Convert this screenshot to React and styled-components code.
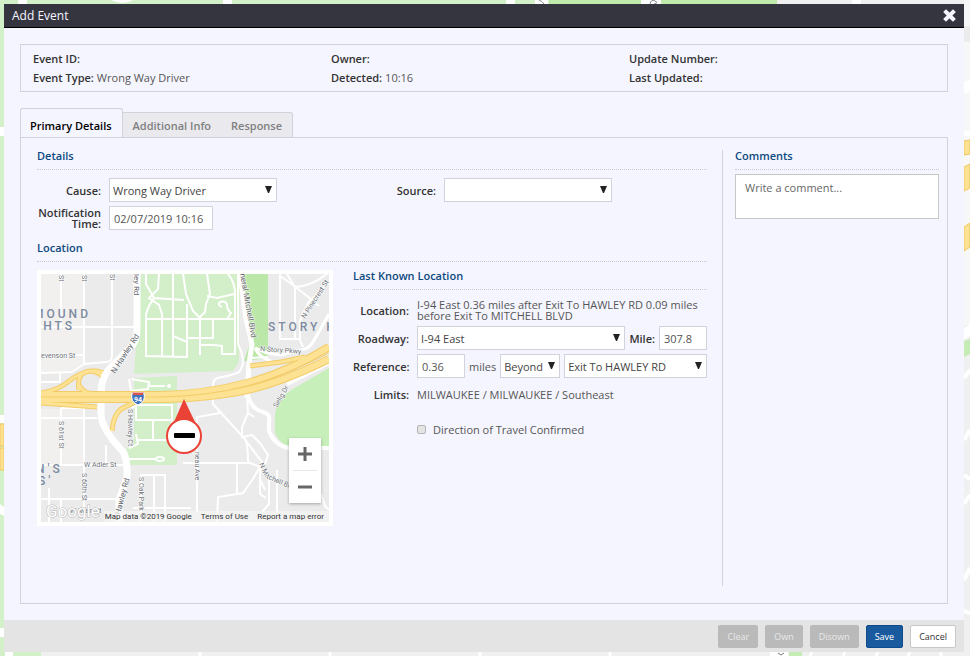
import React, { useState } from "react";
import styled, { createGlobalStyle } from "styled-components";

const GlobalStyle = createGlobalStyle`
    *{
        box-sizing: border-box;
    }
    body{
        margin: 0;
        background-color: #f0f0f0;
        color: #333;
        font-family: "Open Sans", "Noto Sans", sans-serif;
        font-size: 11px;
    }
    button, input, select, textarea{
        font-family: inherit;
        font-size: inherit;
        color: inherit;
    }
`

const Page = styled.div`
    display: flex;
    flex-direction: column;
    min-height: 100vh;
    padding: 4px 6px 4px 4px;
`

const BackdropSvg = styled.svg`
    position: fixed;
    top: 0;
    left: 0;
    width: 100%;
    height: 100%;
    z-index: -1;
`

const Dialog = styled.section`
    display: flex;
    flex-direction: column;
    flex: 1;
    background-color: #f5f5ff;
`

const TitleBar = styled.header`
    display: flex;
    align-items: center;
    justify-content: space-between;
    height: 24px;
    padding: 0 8px 1px;
    background-color: #35353f;
    border-bottom: 1px solid #000;
    color: #f5f5ff;
`

const Title = styled.h1`
    margin: 0;
    font-size: 12px;
    font-weight: normal;
`

const CloseButton = styled.button`
    display: flex;
    padding: 0;
    border: 0;
    background: none;
    color: #f5f5ff;
    cursor: pointer;
`

const Body = styled.div`
    display: flex;
    flex-direction: column;
    flex: 1;
    padding: 16px;
`

const Summary = styled.dl`
    display: grid;
    grid-template-columns: repeat(3, 1fr);
    margin: 0 0 16px;
    padding: 4px 20px 4px 12px;
    border: 1px solid #d2d2dd;
    line-height: 19px;
`

const SummaryItem = styled.div`
    display: flex;
    gap: 3px;
    dt{
        font-weight: 600;
    }
    dd{
        margin: 0;
        color: #555;
    }
`

const TabList = styled.div`
    display: flex;
    align-items: flex-end;
    margin-bottom: -1px;
`

const Tab = styled.button`
    height: ${(props) => (props.$active ? 30 : 26)}px;
    padding: ${(props) => (props.$active ? "4px 10px 0 9px" : "0 10px")};
    border: 1px solid #d2d2dd;
    border-left-width: ${(props) => (props.$active ? 1 : 0)}px;
    border-right-width: ${(props) => (props.$inner ? 0 : 1)}px;
    border-bottom-color: ${(props) => (props.$active ? "#f5f5ff" : "#d2d2dd")};
    border-radius: ${(props) => (props.$inner ? "0" : props.$active ? "3px 3px 0 0" : "0 3px 0 0")};
    background-color: ${(props) => (props.$active ? "#f5f5ff" : "#eaeaee")};
    color: ${(props) => (props.$active ? "#000" : "#808080")};
    font-weight: 600;
    cursor: pointer;
`

const Panel = styled.div`
    display: flex;
    flex: 1;
    padding: 12px 8px 17px 16px;
    border: 1px solid #d2d2dd;
`

const Main = styled.div`
    flex: 1;
    padding-right: 15px;
    border-right: 1px solid #d2d2dd;
`

const Comments = styled.aside`
    width: 216px;
    padding-left: 12px;
`

const Heading = styled.h2`
    height: 20px;
    margin: 0 0 8px;
    border-bottom: 1px dotted #c8c8d2;
    color: #0d4a80;
    font-size: 11px;
    font-weight: 600;
    line-height: 12px;
`

const DetailsGrid = styled.div`
    display: grid;
    grid-template-columns: 1fr 1fr;
    gap: 4px 0;
    margin-bottom: 12px;
`

const Field = styled.div`
    display: flex;
    align-items: center;
    min-height: 24px;
    gap: 4px;
`

const Label = styled.label`
    width: ${(props) => props.$width || "auto"};
    margin-right: ${(props) => (props.$width ? 4 : 0)}px;
    flex-shrink: 0;
    font-weight: 600;
    line-height: 11px;
    text-align: right;
`

const Input = styled.input`
    width: ${(props) => props.$width}px;
    height: 24px;
    padding: 0 4px;
    border: 1px solid #d2d2dd;
    background-color: #fff;
    color: #555;
`

const SelectBox = styled.div`
    position: relative;
    flex: ${(props) => (props.$width ? "none" : "1")};
    width: ${(props) => (props.$width ? props.$width + "px" : "auto")};
    select{
        width: 100%;
        height: 24px;
        padding: 0 14px 0 3px;
        border: 1px solid #d2d2dd;
        border-radius: 0;
        background-color: #fff;
        color: #444;
        appearance: none;
    }
    svg{
        position: absolute;
        top: 8px;
        right: 5px;
        pointer-events: none;
    }
`

const LocationRow = styled.div`
    display: flex;
    align-items: flex-start;
    gap: 20px;
`

const LastKnown = styled.div`
    display: flex;
    flex-direction: column;
    flex: 1;
    gap: 4px;
    ${Heading}{
        margin-bottom: 4px;
    }
`

const Value = styled.span`
    color: #555;
    line-height: 11px;
`

const CheckRow = styled.label`
    display: flex;
    align-items: center;
    gap: 7px;
    height: 24px;
    margin: 7px 0 0 64px;
    color: #555;
    input{
        width: 9px;
        height: 9px;
        margin: 0;
        border: 1px solid #b4b4b4;
        border-radius: 2px;
        background-color: #e4e4e4;
        appearance: none;
    }
    input:checked{
        background-color: #185a9d;
    }
`

const CommentBox = styled.textarea`
    display: block;
    width: 100%;
    height: 45px;
    margin-top: -4px;
    padding: 5px 9px;
    border: 1px solid #c8c8c8;
    background-color: #fff;
    resize: none;
    &::placeholder{
        color: #666;
    }
`

const Footer = styled.footer`
    display: flex;
    justify-content: flex-end;
    align-items: center;
    gap: 7px;
    height: 32px;
    padding: 1px 8px 0;
    background-color: #e4e4e4;
`

const ActionButton = styled.button`
    height: 23px;
    padding: 0 8px;
    border: 1px solid #c8c8c8;
    border-radius: 2px;
    background-color: #fff;
    color: #333;
    font-size: 9px;
    cursor: pointer;
    &:disabled{
        border-color: #bababa;
        background-color: #bababa;
        color: #e8e8e8;
        cursor: default;
    }
`

const PrimaryButton = styled(ActionButton)`
    border-color: #0d4a8c;
    background-color: #185a9d;
    color: #fff;
`

const MapFrame = styled.div`
    position: relative;
    width: 296px;
    height: 256px;
    border: 4px solid #fff;
    overflow: hidden;
    font-family: Roboto, sans-serif;
    > svg{
        display: block;
    }
`

const ZoomControl = styled.div`
    position: absolute;
    right: 8px;
    bottom: 19px;
    display: flex;
    flex-direction: column;
    align-items: center;
    width: 32px;
    background-color: #fff;
    box-shadow: 0 1px 3px rgba(0, 0, 0, 0.3);
    button{
        display: flex;
        align-items: center;
        justify-content: center;
        width: 24px;
        height: 32px;
        padding: 0;
        border: 0;
        background: none;
    }
    button + button{
        height: 33px;
        border-top: 1px solid #e6e6e6;
    }
`

const MapCredits = styled.div`
    position: absolute;
    right: 0;
    bottom: 0;
    display: flex;
    gap: 9px;
    height: 11px;
    padding: 0 5px 0 1px;
    background-color: rgba(245, 245, 245, 0.7);
    color: #333;
    font-size: 8px;
    line-height: 11px;
    white-space: nowrap;
    a{
        color: inherit;
        text-decoration: none;
    }
`

function Backdrop(){
    return  <BackdropSvg viewBox="0 0 970 656" preserveAspectRatio="none" aria-hidden="true">
                <rect width="970" height="656" fill="#f0f0f0" />
                <path d="M0 0H777V4H4V656H0Z" fill="#d3f0c8" />
                <path d="M549 0H777V4H549Z" fill="#bfeaac" />
                <path d="M18 0h9v4h-9zM111 0q12 6 22 0zM223 0h9v4h-9zM506 0h9v4h-9zM535 0h13v4h-13zM641 0h20v4h-20zM852 0h9v4h-9z" fill="#fff" />
                <path d="M539 0q3 1 5 4M650 4q1 -5 5 -3t-1 3" stroke="#888" fill="none" />
                <path d="M0 127h4v9H0zM0 415h4v8H0zM0 504l4 3v9l-4-2zM0 628h4v9H0z" fill="#fff" />
                <path d="M0 424h4v22H0zM0 448h4v22H0z" fill="#fde293" stroke="#f3c65f" />
                <path d="M4 652h37v4H4z" fill="#d3f0c8" />
                <path d="M5 652h8v4H5zM770 652h18v4h-18z" fill="#fff" />
                <path d="M789 652h13v4h-13z" fill="#c5ecb5" />
                <path d="M812 652l-2 4M845 652l-2 4M878 652l-2 4M910 652l-2 4M941 652v4M200 652v4M330 652v4M480 652v4M610 652v4" stroke="#fff" strokeWidth="3" />
                <path d="M778 653l3 2l3-2" stroke="#777" fill="none" />
                <rect x="964" y="0" width="6" height="325" fill="#f7f7f7" />
                <path d="M964 26h6v16h-6z" fill="#ebebeb" />
                <path d="M964 82l6-3v12l-6 3zM964 131h6v5h-6zM964 328l6-4v12l-6 4z" fill="#fff" />
                <path d="M964 141l6-1v14l-6 1zM964 167l6-3v24l-6 3zM964 227l6-4v24l-6 4z" fill="#fde293" stroke="#f3c65f" />
                <path d="M964 341l6-2v15l-6 3z" fill="#c5ecb5" />
                <path d="M964 378l6-8M964 440l6-10M964 475l6 4M964 504l6-9M964 580l6-12M964 611l6 2" stroke="#fff" strokeWidth="4" />
            </BackdropSvg>
}

function AreaMap(){
    return  <svg width="288" height="248" viewBox="0 0 288 248" role="img" aria-label="Map of the event location">
                <rect width="288" height="248" fill="#ebebeb" />
                <path d="M0 0H43V88L28 98H0ZM0 135H43V191H0Z" fill="#f1f0ee" />
                <g fill="#d3efc9">
                    <path d="M100 0H199L198 88L192 97L93 100Z" />
                    <path d="M93 104L136 102V191H87L83 179L93 165Z" />
                </g>
                <path d="M202 0H227V84L203 87L210 66Z" fill="#bbe8a8" />
                <path d="M288 94L252 115L246 119Q234 132 234 141V159Q240 172 251 173H288Z" fill="#c7efba" />
                <g fill="none" stroke="#fff" strokeWidth="2">
                    <path d="M20 0V53M43 0V89M71 0V82Q71 88 65 88L43 90L31 98L0 99M0 53H93M33 81H43M0 108H19V99" />
                    <path d="M105 0V10L113 24L108 32L105 40V82L146 83M118 0L117 15L108 24L118 31L121 40V82M132 0V82M113 24L143 26M105 45H194" />
                    <path d="M142 0L145 20L152 37L159 44V81M146 30V84M166 0L169 20L165 30L164 38L159 43M166 22L176 24L193 20M187 0Q194 8 194 20V80H181V72L172 71H159M172 46V64H146M132 62L146 68" />
                    <path d="M181 33q-5 -2 -2 -5q6 -2 7 3q0 5 4 8l-4 6" />
                    <path d="M239 0V65H259M239 2L252 11L266 22L278 32M246 0L254 13L254 65M254 13Q272 12 288 -2M259 47V66L262 73M288 8L267 29L259 47" />
                    <path d="M197 0V70Q202 80 202 89Q200 98 196 99Q186 103 176 104Q171 107 172 114M209 84L227 83" />
                    <path d="M20 134V190M43 133V236M20 134H43M0 144H56M0 191H84M65 171V190M0 225H84M8 214V248M20 225V248" />
                    <path d="M88 105L90 117L107 115L108 108L90 105M108 112L124 112M91 134L95 131H131V166H95M95 131V146H131M112 146V166M95 160L97 170L88 174M86 185H116" />
                    <path d="M100 248V201H124V248M113 201V248M92 234H150M176 248L177 223L202 219L212 205L219 193L207 188Q207 165 202 163" />
                    <path d="M172 123V130L202 163L221 188L219 197V220L225 224M156 238V143L179 139M206 121L207 139L201 153V163L211 161L219 169L227 181L224 190M207 139L213 143M142 189H209M196 189V219M228 200V230L221 238M236 196V240M280 220L284 232L288 236M224 216L219 205" />
                </g>
                <circle cx="128" cy="112" r="2" fill="#fff" />
                <ellipse cx="119" cy="185" rx="4" ry="2" fill="#d3efc9" stroke="#fff" strokeWidth="2" />
                <g fill="none" stroke="#fff">
                    <path d="M199 0L205 45L211 70L208 90L206 124" strokeWidth="5" />
                    <path d="M207 121Q210 135 222 138Q230 140 228 148V157Q234 172 248 174H288M288 89L246 110" strokeWidth="4" />
                    <path d="M288 40L272 68Q268 75 260 76L240 81L226 79L214 74" strokeWidth="3" />
                    <path d="M214 74Q218 83 230 87" strokeWidth="3" />
                </g>
                <g fill="none" strokeLinejoin="round">
                    <g stroke="#f3cc68">
                        <path d="M0 121H120Q165 120 206 109T288 73" strokeWidth="8" />
                        <path d="M0 125H120Q170 124 206 116T288 85" strokeWidth="8" />
                        <path d="M0 119Q18 116 28 107Q42 96 55 97L64 99M38 116Q35 98 49 97Q64 99 62 108M38 111Q42 120 55 120M0 129L56 133M71 157Q72 142 80 135L96 127" strokeWidth="5" />
                        <path d="M209 92L240 88L264 83" strokeWidth="5" />
                    </g>
                    <g stroke="#fde293">
                        <path d="M0 121H120Q165 120 206 109T288 73" strokeWidth="6" />
                        <path d="M0 125H120Q170 124 206 116T288 85" strokeWidth="6" />
                        <path d="M0 119Q18 116 28 107Q42 96 55 97L64 99M38 116Q35 98 49 97Q64 99 62 108M38 111Q42 120 55 120M0 129L56 133M71 157Q72 142 80 135L96 127" strokeWidth="3" />
                        <path d="M209 92L240 88L264 83" strokeWidth="3" />
                    </g>
                    <path d="M0 123H120Q168 122 206 112T288 79" stroke="#f3cc68" strokeWidth="1" />
                </g>
                <path d="M60 117Q61 101 71 92L89 74Q96 68 96 55V0M60 129V140Q60 150 71 165L83 179Q87 190 86 203L78 226V248" fill="none" stroke="#fff" strokeWidth="7" />
                <path d="M91 119H103" stroke="#e0605a" strokeWidth="2" />
                <path d="M91 119H103Q105 128 97 131Q89 128 91 119Z" fill="#4373bd" stroke="#fff" strokeWidth="1" />
                <path d="M92 119H102V121H92Z" fill="#d9534f" />
                <text x="97" y="128" fill="#fff" fontSize="7" fontWeight="bold" textAnchor="middle">94</text>
                <g fill="#7d8ba3" fontSize="12" fontWeight="500" letterSpacing="3">
                    <text x="-8" y="44">MOUND</text>
                    <text x="-9" y="56">GHTS</text>
                    <text x="227" y="57">STORY HILL</text>
                    <text x="-5" y="199">N'S</text>
                    <text x="-3" y="211">S'</text>
                </g>
                <g fill="#6b7177" stroke="#fff" strokeWidth="1" strokeLinejoin="round" paintOrder="stroke" fontSize="7">
                    <text x="0" y="84">evenson St</text>
                    <text x="219" y="77" transform="rotate(4 219 77)">N Story Pkwy</text>
                    <text x="43" y="193">W Adler St</text>
                    <text x="29" y="239">W Main St</text>
                    <text transform="translate(18 1) rotate(90)">St</text>
                    <text transform="translate(41 1) rotate(90)">St</text>
                    <text transform="translate(69 0) rotate(90)">St</text>
                    <text transform="translate(18 147) rotate(90)">S 61st St</text>
                    <text transform="translate(41 199) rotate(90)">S 60th St</text>
                    <text transform="translate(87 135) rotate(90)">S Hawley Ct</text>
                    <text transform="translate(98 203) rotate(90)">S Oak Park</text>
                    <text transform="translate(154 178) rotate(90)">neau Ave</text>
                    <text transform="translate(264 45) rotate(-57)">N Pinecrest St</text>
                    <text transform="translate(236 134) rotate(-60)">Selig Dr</text>
                    <text transform="translate(218 190) rotate(65)">N Mi</text>
                    <text transform="translate(225 204) rotate(24)">tchell Blvd</text>
                </g>
                <g fill="#5f666d" stroke="#fff" strokeWidth="1" strokeLinejoin="round" paintOrder="stroke" fontSize="8">
                    <text transform="translate(93 0) rotate(90)">ley Rd</text>
                    <text transform="translate(74 100) rotate(-57)">N Hawley Rd</text>
                    <text transform="translate(79 241) rotate(-75)">Hawley Rd</text>
                    <text transform="translate(199 0) rotate(80)">neral Mitchell Blvd</text>
                </g>
                <text x="5" y="243" fill="#fff" stroke="#b4b4b4" strokeWidth="1" paintOrder="stroke" fontSize="17">Google</text>
                <path d="M143 125L133 148H154Z" fill="#ea4335" />
                <circle cx="143" cy="162" r="17" fill="#fff" stroke="#ea4335" strokeWidth="2" />
                <rect x="133" y="159" width="21" height="5" rx="1" fill="#000" />
            </svg>
}

function Select({ id, label, options, width }){
    return  <SelectBox $width={width}>
                <select id={id} aria-label={label} defaultValue={options[0]}>
                    {options.map((item) => <option key={item}>{item}</option>)}
                </select>
                <svg width="7" height="7" viewBox="0 0 7 7" aria-hidden="true"><path d="M0 0H7L4 7H3Z" fill="#222" /></svg>
            </SelectBox>
}

const summary = [
    { name: "Event ID:", value: "" },
    { name: "Owner:", value: "" },
    { name: "Update Number:", value: "" },
    { name: "Event Type:", value: "Wrong Way Driver" },
    { name: "Detected:", value: "10:16" },
    { name: "Last Updated:", value: "" },
];

const tabs = ["Primary Details", "Additional Info", "Response"];

function App(){
    const [tab, setTab] = useState(0);
    const [confirmed, setConfirmed] = useState(false);

    return  <Page>
                <GlobalStyle />
                <Backdrop />
                <Dialog role="dialog" aria-labelledby="dialog-title">
                    <TitleBar>
                        <Title id="dialog-title">Add Event</Title>
                        <CloseButton aria-label="Close">
                            <svg width="13" height="13" viewBox="0 0 13 13"><path d="M3 3L10 10M10 3L3 10" stroke="currentColor" strokeWidth="4" strokeLinecap="square" /></svg>
                        </CloseButton>
                    </TitleBar>
                    <Body>
                        <Summary>
                            {summary.map((item) => (
                                <SummaryItem key={item.name}>
                                    <dt>{item.name}</dt>
                                    <dd>{item.value}</dd>
                                </SummaryItem>
                            ))}
                        </Summary>
                        <TabList role="tablist">
                            {tabs.map((name, i) => (
                                <Tab key={name} role="tab" aria-selected={tab === i} $active={tab === i} $inner={i === 1} onClick={() => setTab(i)}>{name}</Tab>
                            ))}
                        </TabList>
                        <Panel>
                            <Main>
                                <Heading>Details</Heading>
                                <DetailsGrid>
                                    <Field>
                                        <Label htmlFor="cause" $width="64px">Cause:</Label>
                                        <Select id="cause" width={168} options={["Wrong Way Driver"]} />
                                    </Field>
                                    <Field>
                                        <Label htmlFor="source" $width="64px">Source:</Label>
                                        <Select id="source" width={168} options={[""]} />
                                    </Field>
                                    <Field>
                                        <Label htmlFor="time" $width="64px">Notification Time:</Label>
                                        <Input id="time" $width={104} defaultValue="02/07/2019 10:16" />
                                    </Field>
                                </DetailsGrid>
                                <Heading>Location</Heading>
                                <LocationRow>
                                    <MapFrame>
                                        <AreaMap />
                                        <ZoomControl>
                                            <button aria-label="Zoom in">
                                                <svg width="14" height="14"><path d="M7 0V14M0 7H14" stroke="#666" strokeWidth="3" /></svg>
                                            </button>
                                            <button aria-label="Zoom out">
                                                <svg width="14" height="14"><path d="M0 7H14" stroke="#666" strokeWidth="3" /></svg>
                                            </button>
                                        </ZoomControl>
                                        <MapCredits>
                                            <span>Map data ©2019 Google</span>
                                            <a href="#terms">Terms of Use</a>
                                            <a href="#report">Report a map error</a>
                                        </MapCredits>
                                    </MapFrame>
                                    <LastKnown>
                                        <Heading>Last Known Location</Heading>
                                        <Field>
                                            <Label as="span" $width="56px">Location:</Label>
                                            <Value>I-94 East 0.36 miles after Exit To HAWLEY RD 0.09 miles before Exit To MITCHELL BLVD</Value>
                                        </Field>
                                        <Field>
                                            <Label htmlFor="roadway" $width="56px">Roadway:</Label>
                                            <Select id="roadway" options={["I-94 East"]} />
                                            <Label htmlFor="mile">Mile:</Label>
                                            <Input id="mile" $width={48} defaultValue="307.8" />
                                        </Field>
                                        <Field>
                                            <Label htmlFor="reference" $width="56px">Reference:</Label>
                                            <Input id="reference" $width={48} defaultValue="0.36" />
                                            <Value>miles</Value>
                                            <Select label="Direction" width={60} options={["Beyond"]} />
                                            <Select label="Landmark" options={["Exit To HAWLEY RD"]} />
                                        </Field>
                                        <Field>
                                            <Label as="span" $width="56px">Limits:</Label>
                                            <Value>MILWAUKEE / MILWAUKEE / Southeast</Value>
                                        </Field>
                                        <CheckRow>
                                            <input type="checkbox" checked={confirmed} onChange={() => setConfirmed(!confirmed)} />
                                            Direction of Travel Confirmed
                                        </CheckRow>
                                    </LastKnown>
                                </LocationRow>
                            </Main>
                            <Comments>
                                <Heading>Comments</Heading>
                                <CommentBox aria-label="Comment" placeholder="Write a comment..." />
                            </Comments>
                        </Panel>
                    </Body>
                    <Footer>
                        <ActionButton disabled>Clear</ActionButton>
                        <ActionButton disabled>Own</ActionButton>
                        <ActionButton disabled>Disown</ActionButton>
                        <PrimaryButton>Save</PrimaryButton>
                        <ActionButton>Cancel</ActionButton>
                    </Footer>
                </Dialog>
            </Page>
}

export default App;
